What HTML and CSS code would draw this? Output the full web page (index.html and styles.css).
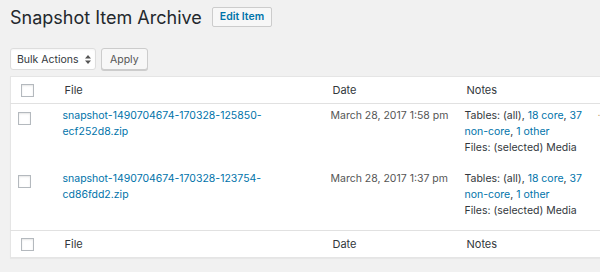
FILE: index.html
```html
<!DOCTYPE html>
<html lang="en">
<head>
    <meta charset="UTF-8">
    <meta name="viewport" content="width=device-width, initial-scale=1.0">
    <title>Snapshot Item Archive</title>
    <link rel="stylesheet" href="styles.css">
</head>
<body>

    <div class="wrap">
        <div class="page-head">
            <h1 class="page-title">Snapshot Item Archive</h1>
            <a class="title-action" href="#">Edit Item</a>
        </div>

        <div class="tablenav">
            <div class="bulk-select">
                <span>Bulk Actions</span>
                <svg width="6" height="9" viewBox="0 0 6 9"><path d="M3 0L6 3.5H0z M3 9L0 5.5H6z" fill="#555"/></svg>
            </div>
            <button class="button">Apply</button>
        </div>

        <table class="list-table">
            <colgroup>
                <col class="col-check">
                <col class="col-file">
                <col class="col-date">
                <col class="col-notes">
                <col class="col-extra">
            </colgroup>
            <thead>
                <tr>
                    <th class="check-column"><span class="cb"></span></th>
                    <th>File</th>
                    <th>Date</th>
                    <th>Notes</th>
                    <th></th>
                </tr>
            </thead>
            <tbody>
                <tr>
                    <td class="check-column"><span class="cb"></span></td>
                    <td><a href="#">snapshot-1490704674-170328-125850-ecf252d8.zip</a></td>
                    <td class="date">March 28, 2017 1:58 pm</td>
                    <td class="notes">Tables: (all), <a href="#">18 core</a>, <a href="#">37 non-core</a>, <a href="#">1 other</a><br>Files: (selected) Media</td>
                    <td class="extra">·</td>
                </tr>
                <tr>
                    <td class="check-column"><span class="cb"></span></td>
                    <td><a href="#">snapshot-1490704674-170328-123754-cd86fdd2.zip</a></td>
                    <td class="date">March 28, 2017 1:37 pm</td>
                    <td class="notes">Tables: (all), <a href="#">18 core</a>, <a href="#">37 non-core</a>, <a href="#">1 other</a><br>Files: (selected) Media</td>
                    <td class="extra"></td>
                </tr>
            </tbody>
            <tfoot>
                <tr>
                    <th class="check-column"><span class="cb"></span></th>
                    <th>File</th>
                    <th>Date</th>
                    <th>Notes</th>
                    <th></th>
                </tr>
            </tfoot>
        </table>

        <div class="tablenav">
            <div class="bulk-select">
                <span>Bulk Actions</span>
                <svg width="6" height="9" viewBox="0 0 6 9"><path d="M3 0L6 3.5H0z M3 9L0 5.5H6z" fill="#555"/></svg>
            </div>
            <button class="button">Apply</button>
        </div>
    </div>

</body>
</html>
```

FILE: styles.css
```css
html, body {
    overflow: hidden;
}
body {
    margin: 0;
    background: #f1f1f1;
    font-family: Inter, "Noto Sans", sans-serif;
    font-size: 10.5px;
    color: #32373c;
}
a {
    color: #0073aa;
    text-decoration: none;
}
.wrap {
    padding-left: 10px;
}
.page-head {
    display: flex;
    align-items: center;
    gap: 10px;
    height: 34px;
}
.page-title {
    margin: 0;
    font-size: 18px;
    font-weight: 400;
    color: #23282d;
}
.title-action {
    display: inline-block;
    height: 18px;
    line-height: 18px;
    padding: 0 7px;
    border: 1px solid #ccc;
    border-radius: 2px;
    background: #f7f7f7;
    font-weight: 600;
    font-size: 10.5px;
}
.tablenav {
    display: flex;
    gap: 5px;
    margin-top: 14px;
    height: 22px;
}
.bulk-select {
    display: flex;
    align-items: center;
    justify-content: space-between;
    width: 74px;
    height: 20px;
    padding: 0 4px 0 6px;
    background: #fff;
    border: 1px solid #ddd;
    border-radius: 3px;
    box-shadow: inset 0 1px 2px rgba(0,0,0,0.04);
    color: #32373c;
}
.button {
    height: 22px;
    padding: 0 8px;
    background: #f7f7f7;
    border: 1px solid #ccc;
    border-radius: 3px;
    box-shadow: 0 1px 0 #ccc;
    color: #555;
    font-family: inherit;
    font-size: 10.5px;
}
.list-table {
    margin-top: 6px;
    width: 678px;
    table-layout: fixed;
    border-collapse: collapse;
    border: 1px solid #e5e5e5;
    background: #fff;
    box-shadow: 0 1px 1px rgba(0,0,0,0.04);
}
.col-check { width: 42px; }
.col-file { width: 268px; }
.col-date { width: 134px; }
.col-notes { width: 133px; }
.col-extra { width: 100px; }
.list-table th {
    text-align: left;
    font-weight: 400;
    font-size: 11px;
    color: #32373c;
    height: 26px;
    padding: 0 10px 0 12px;
    line-height: 16px;
}
.list-table thead th {
    border-bottom: 1px solid #e1e1e1;
}
.list-table tfoot th {
    border-top: 1px solid #e1e1e1;
}
.list-table td {
    vertical-align: top;
    padding: 4px 3px 11px 10px;
    line-height: 16px;
    height: 48px;
}
.list-table th.check-column {
    padding: 0 0 0 10px;
}
.list-table td.check-column {
    padding: 8px 0 0 7px;
}
.cb {
    display: block;
    width: 11px;
    height: 11px;
    border: 1px solid #b4b9be;
    background: #fff;
    box-shadow: inset 0 1px 2px rgba(0,0,0,0.1);
}
.date {
    color: #555;
}
.extra {
    color: #c9a66b;
}
```
